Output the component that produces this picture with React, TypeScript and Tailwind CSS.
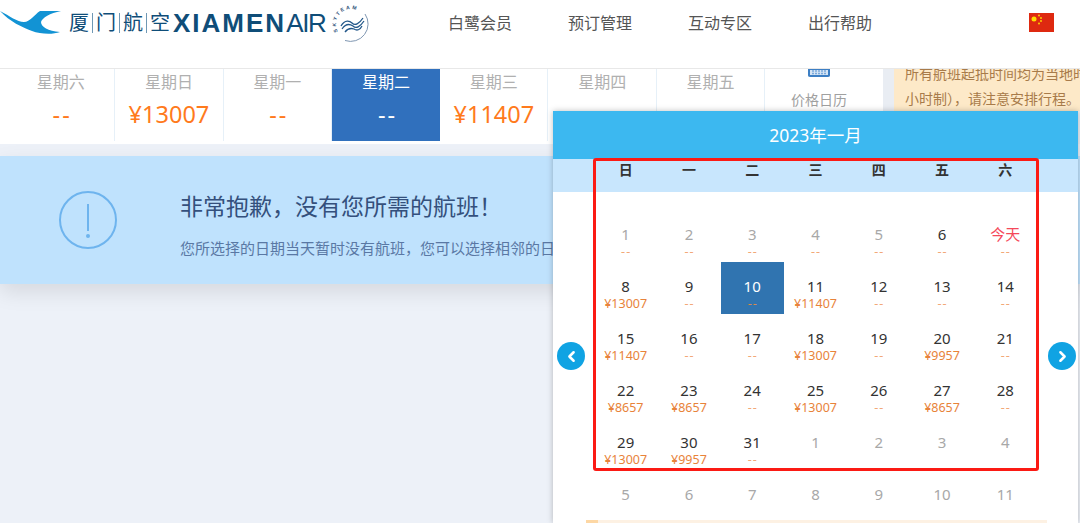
import { ChevronLeft, ChevronRight } from 'lucide-react';

const font = { fontFamily: '"Noto Sans", "Noto Sans CJK SC", sans-serif' };

const nav = ['白鹭会员', '预订管理', '互动专区', '出行帮助'];

const strip = [
  { day: '星期六', price: '--' },
  { day: '星期日', price: '¥13007' },
  { day: '星期一', price: '--' },
  { day: '星期二', price: '--', active: true },
  { day: '星期三', price: '¥11407' },
  { day: '星期四', price: '--' },
  { day: '星期五', price: '--' },
];

const weekdays = ['日', '一', '二', '三', '四', '五', '六'];

type Cell = { n: string; p?: string; kind?: 'muted' | 'today' | 'active' };

const g = (n: string, p?: string): Cell => ({ n, p, kind: 'muted' });
const d = (n: string, p = '--'): Cell => ({ n, p });

const rows: Cell[][] = [
  [g('1', '--'), g('2', '--'), g('3', '--'), g('4', '--'), g('5', '--'), { n: '6', p: '--' }, { n: '今天', p: '--', kind: 'today' }],
  [d('8', '¥13007'), d('9'), { n: '10', p: '--', kind: 'active' }, d('11', '¥11407'), d('12'), d('13'), d('14')],
  [d('15', '¥11407'), d('16'), d('17'), d('18', '¥13007'), d('19'), d('20', '¥9957'), d('21')],
  [d('22', '¥8657'), d('23', '¥8657'), d('24'), d('25', '¥13007'), d('26'), d('27', '¥8657'), d('28')],
  [d('29', '¥13007'), d('30', '¥9957'), d('31'), g('1'), g('2'), g('3'), g('4')],
  [g('5'), g('6'), g('7'), g('8'), g('9'), g('10'), g('11')],
];

function Logo() {
  return (
    <div className="flex items-center">
      <svg width="62" height="26" viewBox="0 0 62 26" className="shrink-0">
        <path
          d="M0 1C10 6 17 12 24 12C30 12 34 5 40 1L61 1C50 3 42 8 41 12C41 17 48 21 60 22C52 25 40 24 32 21C22 17 10 12 0 1Z"
          fill="#1293d4"
        />
      </svg>
      <div className="ml-[7px] flex items-center text-[20px] leading-none text-[#0f4d78] whitespace-nowrap">
        <span>厦</span>
        <span className="mx-[3px] h-[20px] w-px bg-[#6f98b4]" />
        <span>门</span>
        <span className="mx-[3px] h-[20px] w-px bg-[#6f98b4]" />
        <span>航</span>
        <span className="mx-[3px] h-[20px] w-px bg-[#6f98b4]" />
        <span>空</span>
      </div>
      <span className="ml-[3px] text-[26px] leading-none text-[#0f4d78] whitespace-nowrap" style={{ fontFamily: '"Liberation Sans", sans-serif' }}>
        <span className="font-bold tracking-[2px]">XIAMEN</span>
        <span className="tracking-[-1.3px]">AIR</span>
      </span>
      <svg width="40" height="40" viewBox="0 0 40 40" className="ml-[4px] shrink-0 overflow-visible">
        <path d="M35 11A17.5 17.5 0 0 1 15 37.5" fill="none" stroke="#7f97b2" strokeWidth="1" />
        <path id="skyteam-ring" d="M8 28.500A15 15 0 0 1 33 12" fill="none" />
        <text fontSize="5" fontWeight="700" fill="#2c4f78" letterSpacing="2" style={{ fontFamily: '"Liberation Sans", sans-serif' }}>
          <textPath href="#skyteam-ring">SKYTEAM</textPath>
        </text>
        <path
          d="M11 23C15 16 20 18 22 20C25 23 29 21 33 15M12 26C16 20 20 21 23 23C26 26 30 24 34 18M15 29C18 25 21 25 24 26C27 28 30 27 32 23"
          fill="none"
          stroke="#23588a"
          strokeWidth="1.300"
        />
      </svg>
    </div>
  );
}

function Header() {
  return (
    <header className="h-[69px] shrink-0 bg-white border-b border-[#e8e8e8] flex items-start">
      <div className="w-[448px] shrink-0 pt-[3px]">
        <Logo />
      </div>
      <nav className="flex gap-[56px] pt-[12px] text-[16px] leading-[22px] text-[#555]">
        {nav.map((item) => (
          <a key={item} className="whitespace-nowrap">{item}</a>
        ))}
      </nav>
      <svg width="25" height="19" viewBox="0 0 25 19" className="ml-[157px] mt-[13px] shrink-0">
        <rect width="25" height="19" fill="#de2910" />
        <circle cx="5" cy="6" r="2.5" fill="#ffde00" />
        <circle cx="10" cy="2.5" r="0.9" fill="#ffde00" />
        <circle cx="12" cy="5" r="0.9" fill="#ffde00" />
        <circle cx="12" cy="8" r="0.9" fill="#ffde00" />
        <circle cx="10" cy="10.5" r="0.9" fill="#ffde00" />
      </svg>
    </header>
  );
}

function WeekStrip() {
  return (
    <div className="flex h-[75px] shrink-0 bg-[#e9edf3]">
      <div className="flex w-[883px] shrink-0 bg-white pb-[3px] pl-[7px]">
        {strip.map((s) => (
          <div
            key={s.day}
            className={
              s.active
                ? 'w-[108.3px] text-center bg-[#3070bd] text-white'
                : 'w-[108.3px] text-center border-r border-[#e6f0f8] text-[#b0b0b0]'
            }
          >
            <div className="text-[16px] leading-[22px] mt-[2px]">{s.day}</div>
            <div
              className={
                (s.active ? 'text-white ' : 'text-[#ff7a1c] ') +
                (s.price === '--'
                  ? 'text-[23.5px] leading-[34px] mt-[4px] pl-[3px] tracking-[2px]'
                  : 'text-[23.5px] leading-[34px] mt-[4px]')
              }
            >
              {s.price}
            </div>
          </div>
        ))}
        <div className="w-[108px] text-center overflow-hidden">
          <svg width="22" height="9" viewBox="0 0 22 9" className="mx-auto">
            <path d="M1 0V6.5Q1 7 2.5 7H19.5Q21 7 21 6.5V0Z" fill="#d5e4f4" stroke="#3d7fc4" strokeWidth="2" />
            <path d="M4 2H18M4 4.5H18" stroke="#7aa9dc" strokeWidth="1.5" strokeDasharray="2 1" />
          </svg>
          <div className="text-[14px] leading-[20px] mt-[12px] text-[#a0a0a0]">价格日历</div>
        </div>
      </div>
      <div className="ml-[11px] flex-1 h-[42px] bg-[#fde9c8] overflow-hidden pl-[11px] text-[14px] leading-[25px] text-[#a87b4a] whitespace-nowrap">
        <div className="-mt-[8px]">所有航班起抵时间均为当地时</div>
        <div>小时制），请注意安排行程。</div>
      </div>
    </div>
  );
}

function Notice() {
  return (
    <section className="mt-[12px] h-[128px] shrink-0 bg-[#bfe2fd] flex shadow-[0_8px_20px_rgba(0,0,0,0.1)]">
      <div className="w-[180px] shrink-0 pl-[58px] pt-[34px]">
        <svg width="60" height="60" viewBox="0 0 60 60">
          <circle cx="30" cy="30" r="28" fill="none" stroke="#6eb4ee" strokeWidth="2" />
          <path d="M29 14H31L31 41H29Z" fill="#6eb4ee" />
          <circle cx="30" cy="46" r="2" fill="#6eb4ee" />
        </svg>
      </div>
      <div className="pt-[33px] whitespace-nowrap">
        <h2 className="text-[23px] leading-[34px] text-[#34507c]">非常抱歉，没有您所需的航班！</h2>
        <p className="mt-[15px] text-[15px] leading-[20px] text-[#5a78a4]">您所选择的日期当天暂时没有航班，您可以选择相邻的日期查询</p>
      </div>
    </section>
  );
}

function DayCell({ cell }: { cell: Cell }) {
  const active = cell.kind === 'active';
  const muted = cell.kind === 'muted';
  const numClass = active
    ? 'text-white'
    : muted
      ? 'text-[#a8a8a8]'
      : cell.kind === 'today'
        ? 'text-[#f5485a]'
        : 'text-[#333]';
  const priceClass =
    cell.p === '--'
      ? active
        ? 'text-[#d98a4e] pl-[1px] tracking-[1px]'
        : 'text-[#f2a878] pl-[1px] tracking-[1px]'
      : 'text-[#e8833a]';
  return (
    <div className={active ? 'h-[52px] pt-[14px] text-center bg-[#3074b0]' : 'h-[52px] pt-[14px] text-center'}>
      <div className={'text-[15px] leading-[20px] ' + numClass}>{cell.n}</div>
      {cell.p && <div className={'text-[12.5px] leading-[15px] ' + priceClass}>{cell.p}</div>}
    </div>
  );
}

function CalendarPopup() {
  return (
    <div className="absolute left-[553px] top-[111px] w-[525px] h-[412px] bg-white shadow-[0_0_6px_rgba(0,0,0,0.25)] overflow-hidden">
      <div className="h-[48px] bg-[#3cb8f0] text-white text-[17.5px] leading-[48px] text-center">2023年一月</div>
      <div className="h-[33px] bg-[#c8e6fd] px-[41px] grid grid-cols-7">
        {weekdays.map((w) => (
          <div key={w} className="text-center text-[14px] leading-[22px] font-bold text-[#333]">{w}</div>
        ))}
      </div>
      <div className="mt-[18px] px-[41px] grid grid-cols-7">
        {rows.flat().map((c, i) => (
          <DayCell key={i} cell={c} />
        ))}
      </div>
      <div className="absolute left-[33px] right-[31px] bottom-0 h-[3px] bg-[#fdf1e3]">
        <div className="w-[12px] h-full bg-[#fdd7a4]" />
      </div>
      <button className="absolute left-[4px] top-[231px] w-[28px] h-[28px] rounded-full bg-[#10a3e3] text-white flex items-center justify-center">
        <ChevronLeft size={17} strokeWidth={3.5} />
      </button>
      <button className="absolute right-[2px] top-[231px] w-[28px] h-[28px] rounded-full bg-[#10a3e3] text-white flex items-center justify-center">
        <ChevronRight size={17} strokeWidth={3.5} />
      </button>
      <div className="absolute left-[40px] top-[47px] w-[446px] h-[313px] border-[3.5px] border-[#fb1a14] rounded-[3px]" />
    </div>
  );
}

export default function App() {
  return (
    <div className="relative h-[523px] w-[1080px] overflow-hidden bg-[#edf1f8]" style={font}>
      <div className="flex flex-col">
        <Header />
        <WeekStrip />
        <Notice />
      </div>
      <CalendarPopup />
    </div>
  );
}
